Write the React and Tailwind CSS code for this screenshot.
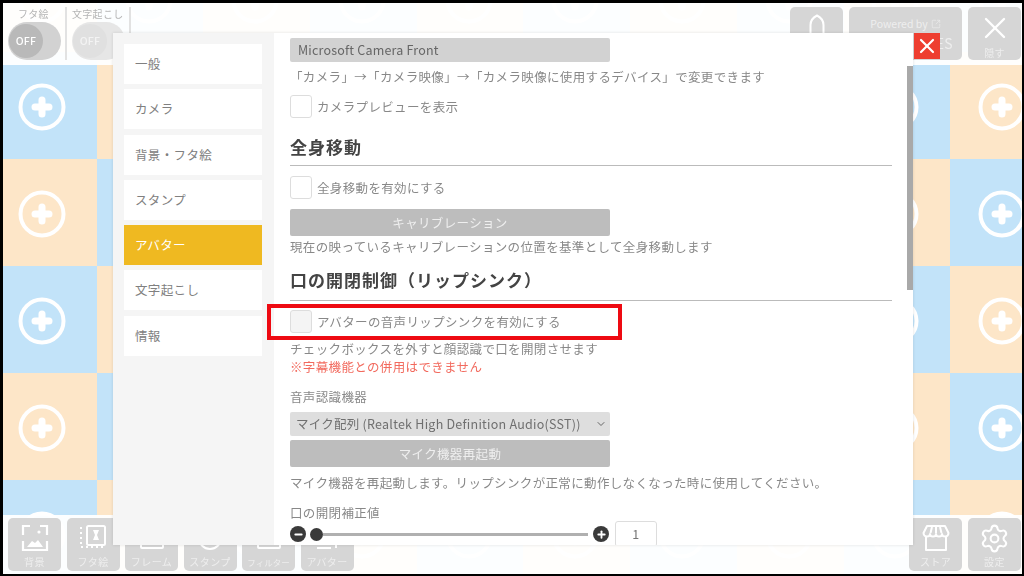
import React from "react";
import { Settings, X, ChevronDown, Plus, Minus, SquareArrowOutUpRight } from "lucide-react";

const rows = [0, 1, 2, 3, 4, 5];
const cols = [0, 1, 2, 3, 4, 5, 6, 7, 8, 9];

function Cell({ blue }) {
  return (
    <div className={`flex items-center justify-center pr-[3px] pt-[3px] ${blue ? "bg-[#c2e3f9]" : "bg-[#fde6c8]"}`}>
      <svg width="48" height="48" viewBox="0 0 48 48" fill="none">
        <circle cx="24" cy="24" r="21.5" stroke="#fff" strokeWidth="4" />
        <path d="M24 17v14M17 24h14" stroke="#fff" strokeWidth="7" strokeLinecap="round" />
      </svg>
    </div>
  );
}

function Toggle({ faded }) {
  return (
    <div className={`flex h-[38px] w-[53px] items-center rounded-full pl-[1px] ${faded ? "bg-[#e6e6e6]" : "bg-[#d2d2d2]"}`}>
      <div className={`flex h-[34px] w-[34px] items-center justify-center rounded-full text-[10.5px] font-medium tracking-[0.3px] ${faded ? "bg-[#e0e0e0] text-[#f3f3f3]" : "bg-[#b9b9b9] text-white"}`}>
        OFF
      </div>
    </div>
  );
}

function ToolBtn({ label, labelClass, children }) {
  return (
    <div className="flex h-[53px] w-[53px] flex-col items-center justify-between rounded-[5px] bg-[#d6d6d6] pb-[2px] pt-[5px] text-[10px] leading-[14px] tracking-[0.4px] text-[#eeeeee]">
      <div className="flex h-[30px] items-center justify-center">{children}</div>
      <span className={`whitespace-nowrap ${labelClass || ""}`}>{label}</span>
    </div>
  );
}

function Check({ shaded }) {
  return (
    <div className={`h-[23px] w-[22px] rounded-[3px] border border-[#dddddd] ${shaded ? "bg-[#f4f4f4]" : "bg-white"}`} />
  );
}

function Select({ children }) {
  return (
    <div className="flex h-[24px] w-[320px] items-center justify-between rounded-[2px] bg-[#dedede] pl-[6px] pr-[3px] text-[#6f6f6f]">
      {children}
    </div>
  );
}

function GrayBtn({ children }) {
  return (
    <div className="flex h-[27px] w-[320px] items-center justify-center rounded-[2px] bg-[#bdbdbd] text-[#efefef]">
      {children}
    </div>
  );
}

function Heading({ children, className }) {
  return (
    <div className={`border-b border-[#bbbbbb] text-[17px] font-bold leading-[25px] tracking-[1px] text-[#444444] ${className}`}>
      {children}
    </div>
  );
}

const menu = ["一般", "カメラ", "背景・フタ絵", "スタンプ", "アバター", "文字起こし", "情報"];

export default function App() {
  return (
    <div
      className="h-[576px] w-[1024px] bg-black pb-[2px] pl-[3px] pr-[2px] pt-[3px] text-[12.5px] leading-[18px] tracking-[0.35px]"
      style={{ fontFamily: '"Noto Sans CJK JP", "Noto Sans", sans-serif' }}
    >
      <div className="relative flex h-full w-full flex-col justify-between overflow-hidden blur-[0.6px]">
        {/* checker background */}
        <div className="absolute left-[-13px] top-[-58px] grid grid-cols-[repeat(10,106.7px)] auto-rows-[107px]">
          {rows.map((r) => cols.map((c) => <Cell key={`${r}-${c}`} blue={(r + c) % 2 === 1} />))}
        </div>

        {/* top bar */}
        <div className="relative flex h-[62px] items-start justify-between bg-white/[0.94] pl-[5px] pr-[1px] pt-[4px]">
          <div className="flex text-[10px] leading-[14px] tracking-[0.3px] text-[#b5b5b5]">
            <div className="flex w-[59px] flex-col items-start border-r-2 border-[#e2e2e2]">
              <span className="ml-[10px] h-[15px]">フタ絵</span>
              <Toggle />
            </div>
            <div className="flex w-[64px] flex-col border-r-2 border-[#e2e2e2] pl-[5px]">
              <span className="h-[15px] whitespace-nowrap">文字起こし</span>
              <Toggle faded />
            </div>
          </div>
          <div className="flex gap-[6px]">
            <div className="flex h-[53px] w-[53px] justify-center rounded-[5px] bg-[#d6d6d6] pt-[7px]">
              <svg width="16" height="24" viewBox="0 0 16 24" fill="none">
                <path d="M1.5 24V11C1.5 6 5 3 8 1.5C11 3 14.5 6 14.5 11V24" stroke="#fff" strokeWidth="2" />
              </svg>
            </div>
            <div className="relative flex h-[53px] w-[113px] flex-col items-center rounded-[5px] bg-[#d6d6d6] pt-[10px] text-[10.5px] leading-[14px] text-[#eeeeee]">
              <div className="flex items-center gap-[3px] tracking-normal">
                Powered by
                <SquareArrowOutUpRight size={10} strokeWidth={1.5} />
              </div>
              <div className="mt-[3px] self-end pr-[9px] text-[14px] leading-[18px] text-[#eeeeee]">ES</div>
            </div>
            <div className="flex h-[53px] w-[53px] flex-col items-center rounded-[5px] bg-[#d6d6d6] pt-[3px] text-[10px] leading-[14px] text-[#eeeeee]">
              <X size={36} strokeWidth={1.6} color="#ffffff" />
              <span>隠す</span>
            </div>
          </div>
        </div>

        {/* bottom bar */}
        <div className="relative flex h-[59px] items-end justify-between bg-white/[0.94] pb-[3px] pl-[5px] pr-[1px]">
          <div className="flex gap-[5.5px]">
            <ToolBtn label="背景">
              <svg width="28" height="28" viewBox="0 0 28 28" fill="none" stroke="#fff" strokeWidth="2.2">
                <path d="M9 2H2v9M19 2h7v9M2 17v9h24v-9" />
                <circle cx="18" cy="8" r="1.6" fill="#fff" stroke="none" />
                <path d="M6 23l5-6 3 2 3-3 5 7z" fill="#fff" stroke="none" />
              </svg>
            </ToolBtn>
            <ToolBtn label="フタ絵">
              <svg width="28" height="28" viewBox="0 0 28 28" fill="none" stroke="#fff" strokeWidth="2">
                <rect x="8" y="2" width="18" height="19" rx="1.5" />
                <path d="M14 6h6l-2 5 2 5h-6l2-5z" fill="#fff" stroke="none" />
                <path d="M2 3v20h22" strokeDasharray="2 3" />
              </svg>
            </ToolBtn>
            <ToolBtn label="フレーム">
              <svg width="28" height="28" viewBox="0 0 28 28" fill="none" stroke="#fff" strokeWidth="2">
                <rect x="3" y="6" width="22" height="18" rx="1" />
              </svg>
            </ToolBtn>
            <ToolBtn label="スタンプ">
              <svg width="28" height="28" viewBox="0 0 28 28" fill="none" stroke="#fff" strokeWidth="2">
                <circle cx="14" cy="14" r="11" />
              </svg>
            </ToolBtn>
            <ToolBtn label="フィルター" labelClass="text-[8.5px] tracking-normal">
              <svg width="28" height="28" viewBox="0 0 28 28" fill="none" stroke="#fff" strokeWidth="2">
                <rect x="3" y="6" width="22" height="18" rx="1" />
              </svg>
            </ToolBtn>
            <ToolBtn label="アバター">
              <svg width="28" height="28" viewBox="0 0 28 28" fill="none" stroke="#fff" strokeWidth="2">
                <path d="M4 24h14M23 20v4" />
              </svg>
            </ToolBtn>
          </div>
          <div className="flex gap-[6px]">
            <ToolBtn label="ストア">
              <svg width="28" height="28" viewBox="0 0 28 28" fill="none" stroke="#fff" strokeWidth="2" strokeLinejoin="round">
                <path d="M5 2h18l3.5 7c0 2-1.500 3.500-3.200 3.500S20 11.500 20 10c0 1.500-1.500 2.500-3 2.500S14 11.500 14 10c0 1.500-1.500 2.500-3 2.500S8 11.500 8 10c0 1.500-1.500 2.500-3.200 2.500S1.500 11 1.500 9z" />
                <path d="M10 3l-1.500 6M14 3v6M18 3l1.500 6" />
                <path d="M4 13v13h20V13" />
              </svg>
            </ToolBtn>
            <ToolBtn label="設定">
              <Settings size={31} strokeWidth={1.6} color="#ffffff" />
            </ToolBtn>
          </div>
        </div>

        {/* modal */}
        <div className="absolute left-[110px] top-[30px] flex h-[512px] w-[800px] bg-white shadow-[0_0_3px_rgba(0,0,0,0.12)]">
          <div className="flex w-[161px] flex-col gap-[5.25px] bg-[#f5f5f5] pl-[11px] pr-[12px] pt-[11px]">
            {menu.map((m) => (
              <div
                key={m}
                className={`flex h-[40px] items-center pl-[11px] ${m === "アバター" ? "bg-[#efb921] text-white" : "bg-white text-[#808080]"}`}
              >
                {m}
              </div>
            ))}
          </div>

          <div className="relative flex-1 overflow-hidden pl-[16px] pr-[21px] pt-[5px] text-[#888888]">
            <div className="absolute right-0 top-[33px] h-[224px] w-[6px] bg-[#a9a9a9]" />
            <div className="flex h-[24px] w-[320px] items-center rounded-[2px] bg-[#d2d2d2] pl-[8px] tracking-[0.2px] text-[#666666]">
              Microsoft Camera Front
            </div>
            <div className="mt-[6px] whitespace-nowrap">「カメラ」→「カメラ映像」→「カメラ映像に使用するデバイス」で変更できます</div>
            <div className="mt-[9px] flex items-center gap-[5px]">
              <Check />
              <span>カメラプレビューを表示</span>
            </div>
            <Heading className="mt-[16px] pb-[6px]">全身移動</Heading>
            <div className="mt-[10px] flex items-center gap-[5px]">
              <Check />
              <span>全身移動を有効にする</span>
            </div>
            <div className="mt-[10px]">
              <GrayBtn>キャリブレーション</GrayBtn>
            </div>
            <div className="mt-[2px]">現在の映っているキャリブレーションの位置を基準として全身移動します</div>
            <Heading className="mt-[11px] pb-[8px]">{"口の開閉制御\uFF08リップシンク\uFF09"}</Heading>
            <div className="mt-[9px] flex items-center gap-[5px]">
              <Check shaded />
              <span>アバターの音声リップシンクを有効にする</span>
            </div>
            <div className="mt-[7px]">チェックボックスを外すと顔認識で口を開閉させます</div>
            <div className="text-[#f26a5e]">※字幕機能との併用はできません</div>
            <div className="mt-[12px]">音声認識機器</div>
            <div className="mt-[6px]">
              <Select>
                <span className="whitespace-nowrap tracking-[0.25px]">マイク配列 (Realtek High Definition Audio(SST))</span>
                <ChevronDown size={12} strokeWidth={2} color="#666666" />
              </Select>
            </div>
            <div className="mt-[4px]">
              <GrayBtn>マイク機器再起動</GrayBtn>
            </div>
            <div className="mt-[7px] whitespace-nowrap">マイク機器を再起動します。リップシンクが正常に動作しなくなった時に使用してください。</div>
            <div className="mt-[12px]">口の開閉補正値</div>
            <div className="mt-[-1px] flex items-center">
              <div className="flex h-[16px] w-[16px] items-center justify-center rounded-full bg-[#3a3a3a]">
                <Minus size={11} strokeWidth={4} color="#ffffff" />
              </div>
              <div className="ml-[4px] h-[13px] w-[13px] rounded-full bg-[#3a3a3a]" />
              <div className="h-[3px] w-[265px] bg-[#b0b0b0]" />
              <div className="ml-[5px] flex h-[16px] w-[16px] items-center justify-center rounded-full bg-[#3a3a3a]">
                <Plus size={11} strokeWidth={4} color="#ffffff" />
              </div>
              <div className="ml-[6px] flex h-[26px] w-[42px] items-center justify-center rounded-[3px] border border-[#dddddd] text-[#777777]">1</div>
            </div>
          </div>
        </div>

        {/* close */}
        <div className="absolute left-[911px] top-[30px] flex h-[26px] w-[26px] items-center justify-center bg-[#ee3e30]">
          <X size={24} strokeWidth={2.2} color="#ffffff" />
        </div>

        {/* annotation */}
        <div className="absolute left-[264px] top-[301px] h-[36px] w-[355px] border-[4px] border-[#ee0a12]" />
      </div>
    </div>
  );
}
